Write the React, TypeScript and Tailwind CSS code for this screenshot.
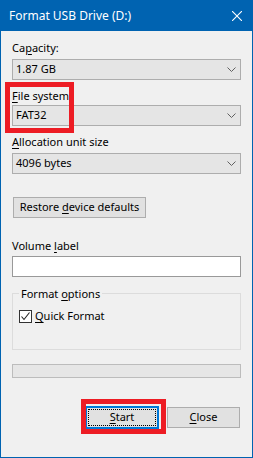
import React from 'react';

const font = "font-['Segoe_UI','Noto_Sans',sans-serif]";

function Key({ children }: { children: React.ReactNode }) {
  return <u className="underline decoration-1 underline-offset-[2px]">{children}</u>;
}

function Chevron() {
  return (
    <svg width="9" height="5" viewBox="0 0 9 5" className="shrink-0">
      <path d="M0.5 0.5 L4.5 4.5 L8.5 0.5" fill="none" stroke="#606060" strokeWidth="1" />
    </svg>
  );
}

function Combo({ value }: { value: string }) {
  return (
    <div className="h-[21px] bg-[#e5e5e5] border border-[#adadad] flex items-center justify-between pl-[3px] pr-[4px]">
      <span>{value}</span>
      <Chevron />
    </div>
  );
}

function Label({ children, mt }: { children: React.ReactNode; mt: string }) {
  return <div className={`leading-[15px] h-[15px] ${mt}`}>{children}</div>;
}

export default function App() {
  return (
    <div className={`${font} text-[11px] text-black w-[253px] h-[458px] bg-[#f0f0f0] border-x border-b border-[#0063b1] relative overflow-hidden`}>
      {/* Title bar */}
      <div className="h-[31px] bg-[#0063b1] -mx-px flex items-center justify-between pl-[9px] pr-[11px] text-white text-[12px]">
        <span>Format USB Drive (D:)</span>
        <svg width="10" height="10" viewBox="0 0 10 10">
          <path d="M0 0 L10 10 M10 0 L0 10" stroke="#fff" strokeWidth="1.1" />
        </svg>
      </div>

      <div className="px-[11px] flex flex-col">
        <Label mt="mt-[9px]">Ca<Key>p</Key>acity:</Label>
        <div className="mt-[4px]"><Combo value="1.87 GB" /></div>

        <Label mt="mt-[8px]"><Key>F</Key>ile system</Label>
        <div className="mt-[2px]"><Combo value="FAT32" /></div>

        <Label mt="mt-[8px]"><Key>A</Key>llocation unit size</Label>
        <div className="mt-[4px]"><Combo value="4096 bytes" /></div>

        <div className="mt-[23px] ml-[1px] w-[133px] h-[21px] bg-[#e1e1e1] border border-[#adadad] flex items-center justify-center">
          <span>Restore <Key>d</Key>evice defaults</span>
        </div>

        <Label mt="mt-[20px]">Volume <Key>l</Key>abel</Label>
        <div className="mt-[3px] h-[21px] bg-white border border-[#999999]" />

        <fieldset className="mt-[9px] border border-[#dcdcdc] px-[6px] pb-[25px]">
          <legend className="px-[2px] leading-[15px]">Format <Key>o</Key>ptions</legend>
          <div className="mt-[8px] flex items-center gap-[3px] h-[15px]">
            <div className="w-[13px] h-[13px] bg-white border border-[#333333] flex items-center justify-center">
              <svg width="11" height="11" viewBox="0 0 11 11">
                <path d="M1.5 5.5 L4 8.5 L9.5 1.5" fill="none" stroke="#222" strokeWidth="1.1" />
              </svg>
            </div>
            <span><Key>Q</Key>uick Format</span>
          </div>
        </fieldset>

        <div className="mt-[14px] h-[14px] bg-[#e6e6e6] border border-[#bcbcbc]" />

        <div className="mt-[28px] flex items-center justify-end gap-[8px] mr-[1px]">
          <div className="relative w-[74px] h-[23px] bg-[#e1e1e1] border-2 border-[#0078d7] flex items-center justify-center">
            <span className="absolute inset-[1px] border border-dotted border-black" />
            <span className="relative"><Key>S</Key>tart</span>
          </div>
          <div className="w-[73px] h-[21px] bg-[#e1e1e1] border border-[#adadad] flex items-center justify-center">
            <span><Key>C</Key>lose</span>
          </div>
        </div>
      </div>

      {/* Annotation highlights */}
      <div className="absolute left-[4px] top-[82px] w-[69px] h-[51px] border-[5px] border-[#ed1c24]" />
      <div className="absolute left-[80px] top-[399px] w-[85px] h-[35px] border-[5px] border-[#ed1c24]" />
    </div>
  );
}
